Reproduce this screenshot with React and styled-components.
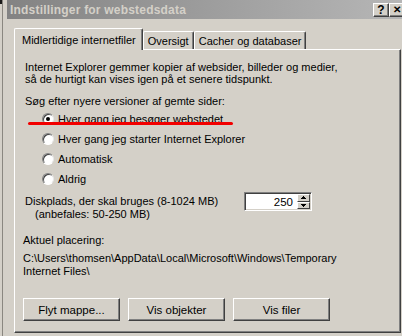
import React from 'react';
import styled, { createGlobalStyle } from 'styled-components';

const GlobalStyle = createGlobalStyle`
  html, body {
    margin: 0;
    padding: 0;
    background: #d4d0c8;
  }
  body {
    font-family: "Liberation Sans", Arial, sans-serif;
    font-size: 11px;
    color: #000;
  }
`;

const radios = [
  { label: 'Hver gang jeg besøger webstedet', checked: true, marked: true },
  { label: 'Hver gang jeg starter Internet Explorer' },
  { label: 'Automatisk' },
  { label: 'Aldrig' },
];

const buttons = ['Flyt mappe...', 'Vis objekter', 'Vis filer'];

const App = () => {
  return (
    <>
      <GlobalStyle />
      <Screen>
        <Edge />
        <Dialog>
          <TitleBar>
            <TitleText>Indstillinger for webstedsdata</TitleText>
            <CaptionButton>?</CaptionButton>
            <CaptionButton $close>✕</CaptionButton>
          </TitleBar>
          <Body>
            <TabStrip>
              <Tab $active>Midlertidige internetfiler</Tab>
              <Tab>Oversigt</Tab>
              <Tab>Cacher og databaser</Tab>
            </TabStrip>
            <Panel>
              <Para>
                Internet Explorer gemmer kopier af websider, billeder og medier,
                <br />
                så de hurtigt kan vises igen på et senere tidspunkt.
              </Para>
              <Label>Søg efter nyere versioner af gemte sider:</Label>
              <RadioList>
                {radios.map((r) => (
                  <RadioRow key={r.label}>
                    <RadioCircle $checked={r.checked} />
                    <span>{r.label}</span>
                    {r.marked && <RedMark />}
                  </RadioRow>
                ))}
              </RadioList>
              <DiskRow>
                <DiskText>
                  <div>Diskplads, der skal bruges (8-1024 MB)</div>
                  <Indented>(anbefales: 50-250 MB)</Indented>
                </DiskText>
                <SpinBox>
                  <SpinValue>250</SpinValue>
                  <SpinButtons>
                    <SpinButton>
                      <svg width="5" height="3" viewBox="0 0 5 3">
                        <path d="M2 0h1v1h1v1h1v1H0V2h1V1h1z" fill="#000" />
                      </svg>
                    </SpinButton>
                    <SpinButton>
                      <svg width="5" height="3" viewBox="0 0 5 3">
                        <path d="M0 0h5v1H4v1H3v1H2V2H1V1H0z" fill="#000" />
                      </svg>
                    </SpinButton>
                  </SpinButtons>
                </SpinBox>
              </DiskRow>
              <Location>
                <div>Aktuel placering:</div>
                <Path>
                  C:\Users\thomsen\AppData\Local\Microsoft\Windows\Temporary
                  <br />
                  Internet Files\
                </Path>
              </Location>
              <ButtonRow>
                {buttons.map((b) => (
                  <PushButton key={b}>{b}</PushButton>
                ))}
              </ButtonRow>
            </Panel>
          </Body>
        </Dialog>
      </Screen>
    </>
  );
};

export default App;

const Screen = styled.div`
  display: flex;
  width: 402px;
  height: 336px;
  overflow: hidden;
  background: #d4d0c8;
`;

const Edge = styled.div`
  width: 2px;
  margin-right: 4px;
  border-right: 1px solid #8a8780;
  background: linear-gradient(#1a1a1a 0 4px, #d4d0c8 4px);
`;

const Dialog = styled.div`
  flex: 1;
  display: flex;
  flex-direction: column;
  min-width: 0;
`;

const TitleBar = styled.div`
  height: 19px;
  display: flex;
  align-items: center;
  padding-left: 3px;
  background: linear-gradient(90deg, #838383, #b6b6b6);
  overflow: hidden;
`;

const TitleText = styled.div`
  flex: 1;
  font-weight: bold;
  font-size: 12px;
  letter-spacing: 0.2px;
  color: #d4d0c8;
  white-space: nowrap;
`;

const CaptionButton = styled.div`
  flex: none;
  width: 14px;
  height: 12px;
  margin-right: ${(p) => (p.$close ? '-3px' : '0')};
  background: #d4d0c8;
  border: 1px solid;
  border-color: #fff #404040 #404040 #fff;
  box-shadow: inset -1px -1px #808080;
  display: flex;
  align-items: center;
  justify-content: center;
  font-weight: bold;
  font-size: ${(p) => (p.$close ? '10px' : '12px')};
  line-height: 1;
`;

const Body = styled.div`
  flex: 1;
  padding: 8px 2px 0 7px;
  display: flex;
  flex-direction: column;
`;

const TabStrip = styled.div`
  display: flex;
  align-items: flex-end;
  height: 22px;
`;

const Tab = styled.div`
  position: relative;
  z-index: ${(p) => (p.$active ? 1 : 0)};
  height: ${(p) => (p.$active ? '21px' : '17px')};
  margin-bottom: ${(p) => (p.$active ? '-1px' : '0')};
  padding: ${(p) => (p.$active ? '0 6px 0 7px' : '0 4px')};
  display: flex;
  align-items: center;
  background: #d4d0c8;
  border-top: 1px solid #fff;
  border-left: 1px solid #fff;
  border-right: 1px solid #404040;
  box-shadow: inset -1px 0 #808080;
  border-radius: 2px 2px 0 0;
  white-space: nowrap;
  font-size: 11px;
`;

const Panel = styled.div`
  width: 375px;
  height: 271px;
  border: 1px solid;
  border-color: #fff #404040 #404040 #fff;
  box-shadow: inset -1px -1px #808080;
  padding: 11px 0 0 10px;
  display: flex;
  flex-direction: column;
`;

const Para = styled.div`
  line-height: 12px;
`;

const Label = styled.div`
  margin-top: 10px;
  line-height: 12px;
`;

const RadioList = styled.div`
  margin-top: 2px;
  display: flex;
  flex-direction: column;
  padding-left: 17px;
`;

const RadioRow = styled.div`
  position: relative;
  height: 20px;
  display: flex;
  align-items: center;
  gap: 4px;
`;

const RadioCircle = styled.span`
  position: relative;
  width: 12px;
  height: 12px;
  box-sizing: border-box;
  border-radius: 50%;
  background: #fff;
  border: 1px solid;
  border-color: #808080 #e8e8e8 #fff #808080;
  box-shadow: inset 1px 1px #404040;

  &::after {
    content: '';
    display: ${(p) => (p.$checked ? 'block' : 'none')};
    position: absolute;
    left: 3px;
    top: 3px;
    width: 4px;
    height: 4px;
    border-radius: 50%;
    background: #000;
  }
`;

const RedMark = styled.span`
  position: absolute;
  left: -14px;
  top: 13px;
  width: 205px;
  height: 3px;
  border-radius: 2px;
  background: #f20000;
`;

const DiskRow = styled.div`
  margin-top: 3px;
  display: flex;
  align-items: flex-start;
`;

const DiskText = styled.div`
  width: 219px;
  padding-top: 3px;
  line-height: 13px;
`;

const Indented = styled.div`
  padding-left: 10px;
`;

const SpinBox = styled.div`
  width: 64px;
  height: 15px;
  display: flex;
  align-items: center;
  background: #fff;
  border: 1px solid;
  border-color: #808080 #fff #fff #808080;
  box-shadow: inset 1px 1px #404040, inset -1px -1px #d4d0c8;
  padding: 1px;
`;

const SpinValue = styled.div`
  flex: 1;
  text-align: right;
  padding-right: 4px;
  font-size: 11.5px;
`;

const SpinButtons = styled.div`
  width: 13px;
  height: 15px;
  display: flex;
  flex-direction: column;
`;

const SpinButton = styled.div`
  flex: 1;
  background: #d4d0c8;
  border: 1px solid;
  border-color: #fff #404040 #404040 #fff;
  display: flex;
  align-items: center;
  justify-content: center;
`;

const Location = styled.div`
  margin-top: 13px;
  margin-left: -2px;
  line-height: 13px;
`;

const Path = styled.div`
  margin-top: 5px;
`;

const ButtonRow = styled.div`
  margin-top: 20px;
  margin-left: -2px;
  display: flex;
  gap: 8px;
`;

const PushButton = styled.div`
  width: 95px;
  height: 21px;
  display: flex;
  align-items: center;
  justify-content: center;
  background: #d4d0c8;
  border: 1px solid;
  border-color: #fff #404040 #404040 #fff;
  box-shadow: inset -1px -1px #808080;
  font-size: 11.5px;
`;
